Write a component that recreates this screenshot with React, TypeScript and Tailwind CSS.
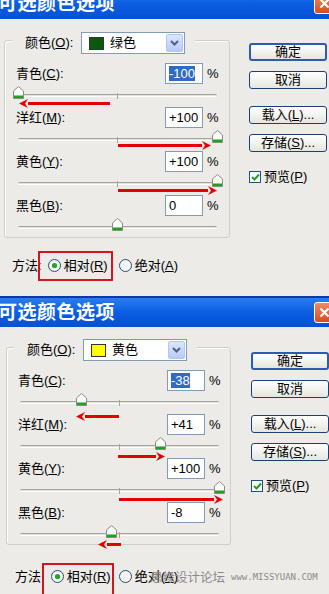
import React from 'react';

type Channel = { label: string; key: string };

type DialogProps = {
  cropTop: boolean;
  swatch: string;
  colorName: string;
  values: number[];
  shifted: boolean;
  height: string;
};

const channels: Channel[] = [
  { label: '青色', key: 'C' },
  { label: '洋红', key: 'M' },
  { label: '黄色', key: 'Y' },
  { label: '黑色', key: 'B' },
];

function fmt(v: number) {
  if (v > 0) return `+${v}`;
  return `${v}`;
}

function Thumb() {
  return (
    <svg width="11" height="13" viewBox="0 0 11 13">
      <path d="M0.5 12.5 V5 L5.5 0.5 L10.5 5 V12.5 Z" fill="#fbfbf8" stroke="#8a8a86" />
      <rect x="1" y="9.5" width="9" height="2.5" fill="#21a021" />
    </svg>
  );
}

function Slider({ value }: { value: number }) {
  const left = ((value + 100) / 200) * 199 - 5.5;
  return (
    <div className="relative ml-[13px] w-[199px] h-[23px]">
      <div className="absolute left-0 right-0 top-[10px] h-[3px] rounded-full border-t border-[#a5a59c] border-b border-b-white bg-[#e2e1da]" />
      <div className="absolute left-[99px] top-[9px] h-[6px] w-px bg-[#a5a59c]" />
      <div className="absolute top-[2px]" style={{ left }}>
        <Thumb />
      </div>
    </div>
  );
}

function Row({ ch, value, selected }: { ch: Channel; value: number; selected: boolean }) {
  return (
    <div className="h-[44px] flex flex-col">
      <div className="flex items-center h-[21px]">
        <div className="w-[160px] pl-[11px] text-[13px] text-black">
          {ch.label}(<span className="underline">{ch.key}</span>):
        </div>
        <div className="w-[38px] h-[21px] border border-[#7f9db9] bg-white flex items-center pl-[3px] text-[13px]">
          {selected ? (
            <span className="bg-[#316ac5] text-white leading-[15px]">{fmt(value)}</span>
          ) : (
            <span className="text-black">{fmt(value)}</span>
          )}
        </div>
        <span className="ml-[4px] text-[13px] text-black">%</span>
      </div>
      <Slider value={value} />
    </div>
  );
}

function Button({ label, def }: { label: React.ReactNode; def?: boolean }) {
  return (
    <div
      className={
        def
          ? 'w-[78px] h-[18px] rounded-[3px] border-2 border-[#2d5bae] bg-gradient-to-b from-white to-[#e6e6de] flex items-center justify-center text-[13px] text-black'
          : 'w-[78px] h-[18px] rounded-[3px] border border-[#1c3f7c] bg-gradient-to-b from-white to-[#e6e6de] flex items-center justify-center text-[13px] text-black'
      }
    >
      {label}
    </div>
  );
}

function Radio({ on }: { on: boolean }) {
  return (
    <svg width="13" height="13" viewBox="0 0 13 13" className="shrink-0">
      <circle cx="6.5" cy="6.5" r="6" fill="#f4f4f0" stroke="#1c5180" />
      {on && <circle cx="6.5" cy="6.5" r="2.6" fill="#27a527" />}
    </svg>
  );
}

function Dialog({ cropTop, swatch, colorName, values, shifted, height }: DialogProps) {
  return (
    <div className={`relative overflow-hidden bg-[#ecebe7] ${height}`}>
      <div
        className={
          cropTop
            ? '-mt-[12px] h-[31px] flex items-center justify-between bg-gradient-to-b from-[#2a7cf0] via-[#0a5ee2] to-[#0650d4]'
            : 'h-[31px] flex items-center justify-between border-t-2 border-[#0a3aa8] bg-gradient-to-b from-[#2a7cf0] via-[#0a5ee2] to-[#0650d4]'
        }
      >
        <span className="-ml-[2px] mt-[2px] text-[19px] font-bold text-white tracking-[0.5px] whitespace-nowrap">可选颜色选项</span>
        <div className="mr-[-6px] w-[21px] h-[21px] rounded-[3px] border border-white bg-gradient-to-b from-[#f08a62] to-[#d44a20] flex items-center justify-center">
          <svg width="11" height="11" viewBox="0 0 11 11">
            <path d="M1.5 1.5 L9.5 9.5 M9.5 1.5 L1.5 9.5" stroke="white" strokeWidth="2.2" />
          </svg>
        </div>
      </div>

      <div className={shifted ? 'flex pt-[20px] pl-[6px]' : 'flex pt-[21px] pl-[4px]'}>
        <div className="w-[226px] flex flex-col">
          <div className="h-[198px] border border-[#cfcfc5] rounded-[3px] shadow-[inset_1px_1px_0_white]">
            <div className="-mt-[9px] ml-[7px] w-fit flex items-center bg-[#ecebe7] pr-[10px] h-[22px]">
              <div className="w-[69px] pl-[13px] text-[13px] text-black whitespace-nowrap">
                颜色(<span className="underline">O</span>):
              </div>
              <div className="w-[104px] h-[22px] border border-[#7f9db9] bg-white flex items-center">
                <div className="ml-[7px] w-[15px] h-[13px] border border-[#333]" style={{ backgroundColor: swatch }} />
                <span className="ml-[6px] flex-1 text-[13px] text-black">{colorName}</span>
                <div className="mr-px w-[17px] h-[18px] rounded-[2px] border border-[#b4c6ef] bg-gradient-to-b from-[#dbe6fd] to-[#b7cbf7] flex items-center justify-center">
                  <svg width="9" height="6" viewBox="0 0 9 6">
                    <path d="M1 1 L4.5 4.5 L8 1" fill="none" stroke="#4d6185" strokeWidth="2" />
                  </svg>
                </div>
              </div>
            </div>
            <div className="mt-[9px]">
              {channels.map((ch, i) => (
                <Row key={ch.key} ch={ch} value={values[i]} selected={i === 0} />
              ))}
            </div>
          </div>

          <div
            className={
              shifted
                ? 'mt-[18px] ml-[9px] flex items-start text-[13px] text-black whitespace-nowrap'
                : 'mt-[13px] ml-[8px] flex items-start text-[13px] text-black whitespace-nowrap'
            }
          >
            <span className={shifted ? 'mt-[5px] h-[17px] flex items-center' : 'mt-[6px] h-[17px] flex items-center'}>方法:</span>
            <div
              className={
                shifted
                  ? '-ml-[3px] h-[40px] w-[72px] border-2 border-[#d2161c] pl-[7px] pt-[3px]'
                  : '-ml-[4px] h-[30px] w-[75px] border-2 border-[#d2161c] pl-[8px] pt-[4px]'
              }
            >
              <div className="h-[17px] flex items-center gap-[3px]">
                <Radio on />
                <span>
                  相对(<span className="underline">R</span>)
                </span>
              </div>
            </div>
            <div className={shifted ? 'ml-[5px] mt-[5px] h-[17px] flex items-center gap-[3px]' : 'ml-[6px] mt-[6px] h-[17px] flex items-center gap-[3px]'}>
              <Radio on={false} />
              <span>
                绝对(<span className="underline">A</span>)
              </span>
            </div>
          </div>
        </div>

        <div className={shifted ? 'ml-[20px] pt-[5px] flex flex-col' : 'ml-[19px] pt-[3px] flex flex-col'}>
          <Button label="确定" def />
          <div className="mt-[10px]">
            <Button label="取消" />
          </div>
          <div className="mt-[17px]">
            <Button
              label={
                <span>
                  载入(<span className="underline">L</span>)...
                </span>
              }
            />
          </div>
          <div className="mt-[10px]">
            <Button
              label={
                <span>
                  存储(<span className="underline">S</span>)...
                </span>
              }
            />
          </div>
          <div className="mt-[15px] flex items-center gap-[3px] text-[13px] text-black">
            <div className="w-[12px] h-[12px] border border-[#1c5180] bg-white flex items-center justify-center">
              <svg width="9" height="8" viewBox="0 0 9 8">
                <path d="M1 4 L3.5 6.5 L8 1.5" fill="none" stroke="#21a121" strokeWidth="2" />
              </svg>
            </div>
            <span>
              预览(<span className="underline">P</span>)
            </span>
          </div>
        </div>
      </div>
    </div>
  );
}

function Arrow({ className, dir }: { className: string; dir: 'left' | 'right' }) {
  const head =
    dir === 'left' ? (
      <svg width="9" height="9" viewBox="0 0 9 9" className="shrink-0">
        <path d="M0 4.5 L9 0 L6 4.5 L9 9 Z" fill="#e40000" />
      </svg>
    ) : (
      <svg width="9" height="9" viewBox="0 0 9 9" className="shrink-0">
        <path d="M9 4.5 L0 0 L3 4.5 L0 9 Z" fill="#e40000" />
      </svg>
    );
  return (
    <div className={`absolute h-[9px] flex items-center ${className}`}>
      {dir === 'left' && head}
      <div className="flex-1 h-[3px] bg-[#e40000]" />
      {dir === 'right' && head}
    </div>
  );
}

export default function App() {
  return (
    <div className="relative w-[329px] h-[594px] overflow-hidden bg-[#ecebe7] font-['Liberation_Sans','Noto_Sans_CJK_SC',sans-serif]">
      <Dialog
        cropTop
        swatch="#0b5a0b"
        colorName="绿色"
        values={[-100, 100, 100, 0]}
        shifted={false}
        height="h-[296px]"
      />
      <Dialog
        cropTop={false}
        swatch="#ffff00"
        colorName="黄色"
        values={[-38, 41, 100, -8]}
        shifted
        height="h-[298px]"
      />

      <Arrow className="left-[19px] top-[99px] w-[91px]" dir="left" />
      <Arrow className="left-[118px] top-[141px] w-[93px]" dir="right" />
      <Arrow className="left-[118px] top-[186px] w-[99px]" dir="right" />
      <Arrow className="left-[76px] top-[412px] w-[43px]" dir="left" />
      <Arrow className="left-[118px] top-[452px] w-[47px]" dir="right" />
      <Arrow className="left-[119px] top-[495px] w-[104px]" dir="right" />
      <Arrow className="left-[98px] top-[540px] w-[23px]" dir="left" />

      <div className="absolute left-[150px] top-[568px] flex items-center gap-[6px] text-[#8a8a8a] whitespace-nowrap">
        <span className="text-[12.5px] font-['Noto_Sans_CJK_SC',sans-serif]">思缘设计论坛</span>
        <span className="text-[9px] font-['DejaVu_Sans_Mono',monospace]">www.MISSYUAN.COM</span>
      </div>
    </div>
  );
}
